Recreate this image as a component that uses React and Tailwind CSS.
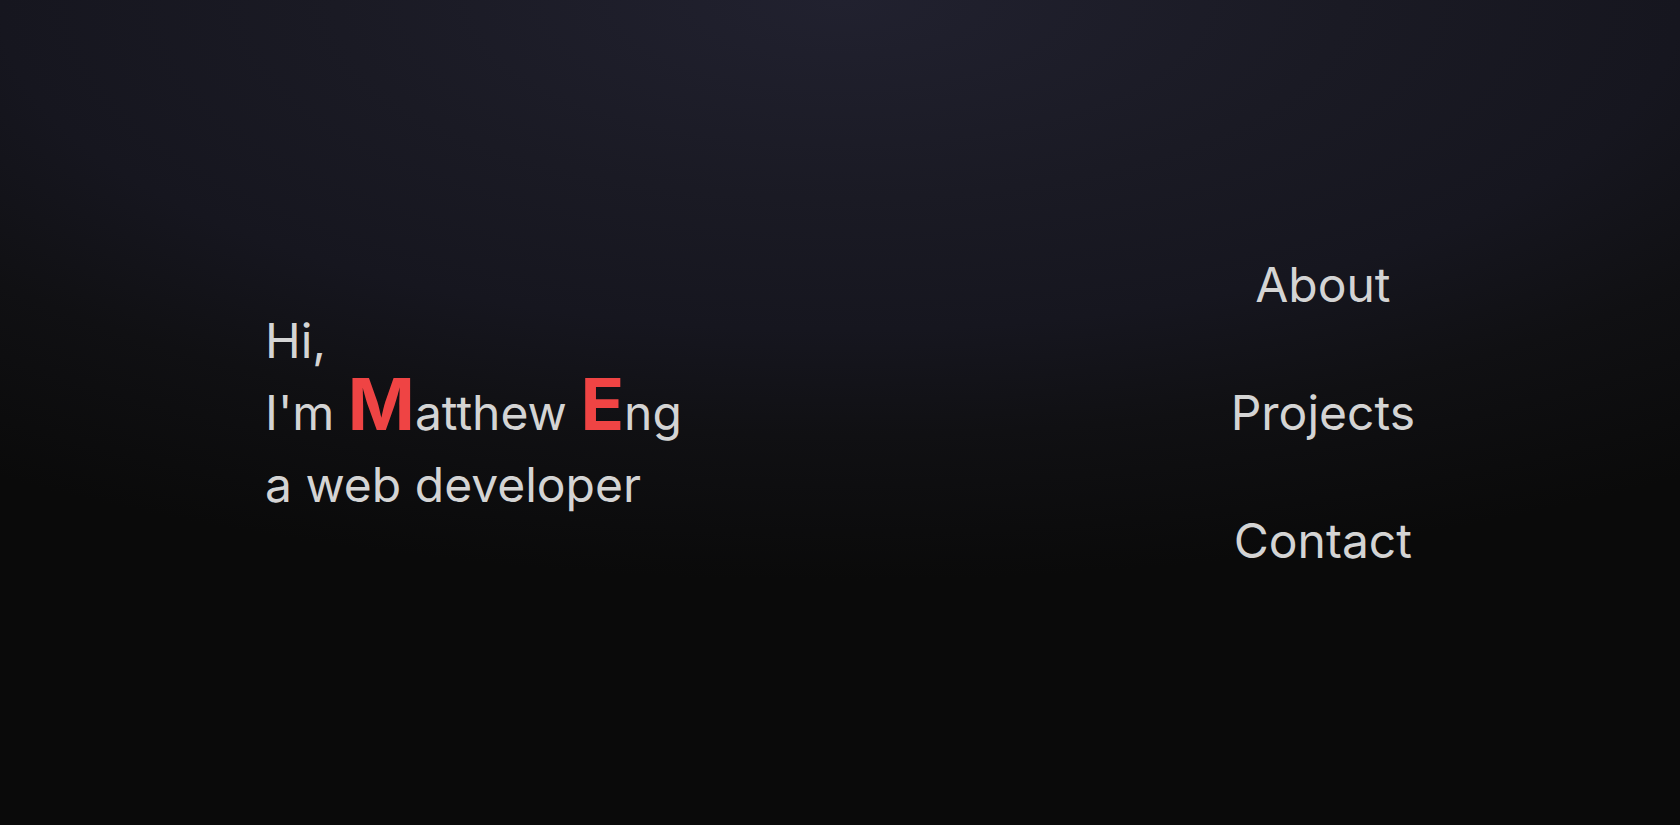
import React from 'react';

const links = ['About', 'Projects', 'Contact'];

const App = () => {
  return (
    <main className="min-h-screen w-full flex items-center justify-between px-[265px] bg-[radial-gradient(ellipse_100%_80%_at_50%_0%,#21212f_0%,#1a1a24_30%,#16161f_50%,#101013_66%,#0a0a0a_88%)] font-['Inter','Noto_Sans',sans-serif] text-[#d4d4d4]">
      {/* Intro */}
      <div className="flex flex-col text-5xl leading-[72px]">
        <div>Hi,</div>
        <div>
          I'm <span className="text-7xl leading-[48px] font-bold text-[#ef4444]">M</span>atthew{' '}
          <span className="text-7xl leading-[48px] font-bold text-[#ef4444]">E</span>ng
        </div>
        <div>a web developer</div>
      </div>

      {/* Nav */}
      <nav className="flex flex-col items-center gap-20 text-5xl leading-none">
        {links.map(link => (
          <a key={link} href="#" className="hover:text-white">
            {link}
          </a>
        ))}
      </nav>
    </main>
  );
};

export default App;
